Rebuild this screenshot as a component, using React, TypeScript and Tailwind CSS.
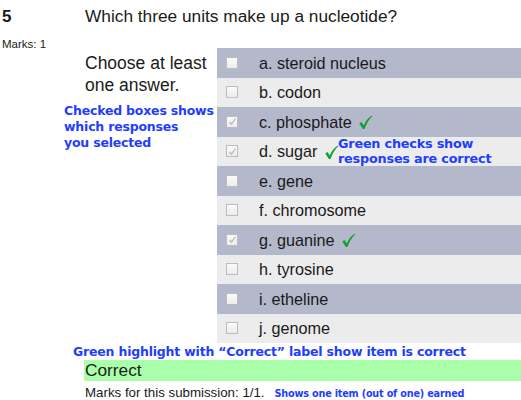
const options = [
  { label: "a. steroid nucleus", checked: false, correct: false },
  { label: "b. codon", checked: false, correct: false },
  { label: "c. phosphate", checked: true, correct: true },
  { label: "d. sugar", checked: true, correct: true },
  { label: "e. gene", checked: false, correct: false },
  { label: "f. chromosome", checked: false, correct: false },
  { label: "g. guanine", checked: true, correct: true },
  { label: "h. tyrosine", checked: false, correct: false },
  { label: "i. etheline", checked: false, correct: false },
  { label: "j. genome", checked: false, correct: false },
];

const note = "font-['DejaVu_Sans',sans-serif] font-bold text-[#1f3dff] tracking-[-0.2px]";

function Box({ checked }: { checked: boolean }) {
  return (
    <span className="w-[12px] h-[12px] border border-[#bdbdbd] bg-gradient-to-b from-[#fbfbfb] to-[#ececec] flex items-center justify-center shrink-0">
      {checked && (
        <svg width="9" height="9" viewBox="0 0 9 9">
          <path d="M1.5 4.8 L3.5 7 L7.5 1.5" fill="none" stroke="#b4b4b4" strokeWidth="1.2" />
        </svg>
      )}
    </span>
  );
}

function GreenCheck() {
  return (
    <svg width="15" height="15" viewBox="0 0 16 17" className="ml-[6px] mt-[2px]">
      <path d="M1 9.5 L3.5 8 L6 12 C8 7 11 3 15 0.5 L15.5 1.5 C12 5 9 10 6.8 16 L5 16 Z" fill="#10a030" />
    </svg>
  );
}

export default function App() {
  return (
    <div className="relative w-[521px] h-[400px] bg-white text-[#1a1a1a] font-['Liberation_Sans',sans-serif] overflow-hidden">
      <div className="flex h-[36px] pt-[4px]">
        <div className="w-[85px] pl-[2px] text-[17px] font-bold">5</div>
        <div className="text-[17.3px]">Which three units make up a nucleotide?</div>
      </div>

      <div className="flex">
        <div className="w-[85px] pl-[2px] text-[11.5px]">Marks: 1</div>
        <div className="w-[132px] pt-[16px] text-[17.5px] leading-[22px]">
          Choose at least
          <br />
          one answer.
        </div>
        <div className="flex-1 mt-[12px]">
          {options.map((o, i) => (
            <div
              key={o.label}
              className={`h-[29.5px] flex items-center pl-[9px] ${i % 2 === 0 ? "bg-[#b3b8cb]" : "bg-[#ececec]"}`}
            >
              <Box checked={o.checked} />
              <span className="ml-[21px] text-[16.2px]">{o.label}</span>
              {o.correct && <GreenCheck />}
            </div>
          ))}
        </div>
      </div>

      <div className={`${note} pl-[73px] h-[16px] leading-[16px] mt-[1px] text-[12.5px]`}>
        Green highlight with “Correct” label show item is correct
      </div>
      <div className="ml-[84px] h-[21px] bg-[#aaffaa] pl-[1px] text-[17.3px] leading-[21px]">Correct</div>
      <div className="flex items-baseline pl-[85px] pt-[2px]">
        <span className="text-[13.3px]">Marks for this submission: 1/1.</span>
        <span className={`${note} ml-[10px] text-[9.7px]`}>Shows one item (out of one) earned</span>
      </div>

      <div className={`${note} absolute left-[64px] top-[103px] leading-[16px] text-[12.5px]`}>
        Checked boxes shows
        <br />
        which responses
        <br />
        you selected
      </div>
      <div className={`${note} absolute left-[338px] top-[136px] leading-[15px] text-[12.8px]`}>
        Green checks show
        <br />
        responses are correct
      </div>
    </div>
  );
}
